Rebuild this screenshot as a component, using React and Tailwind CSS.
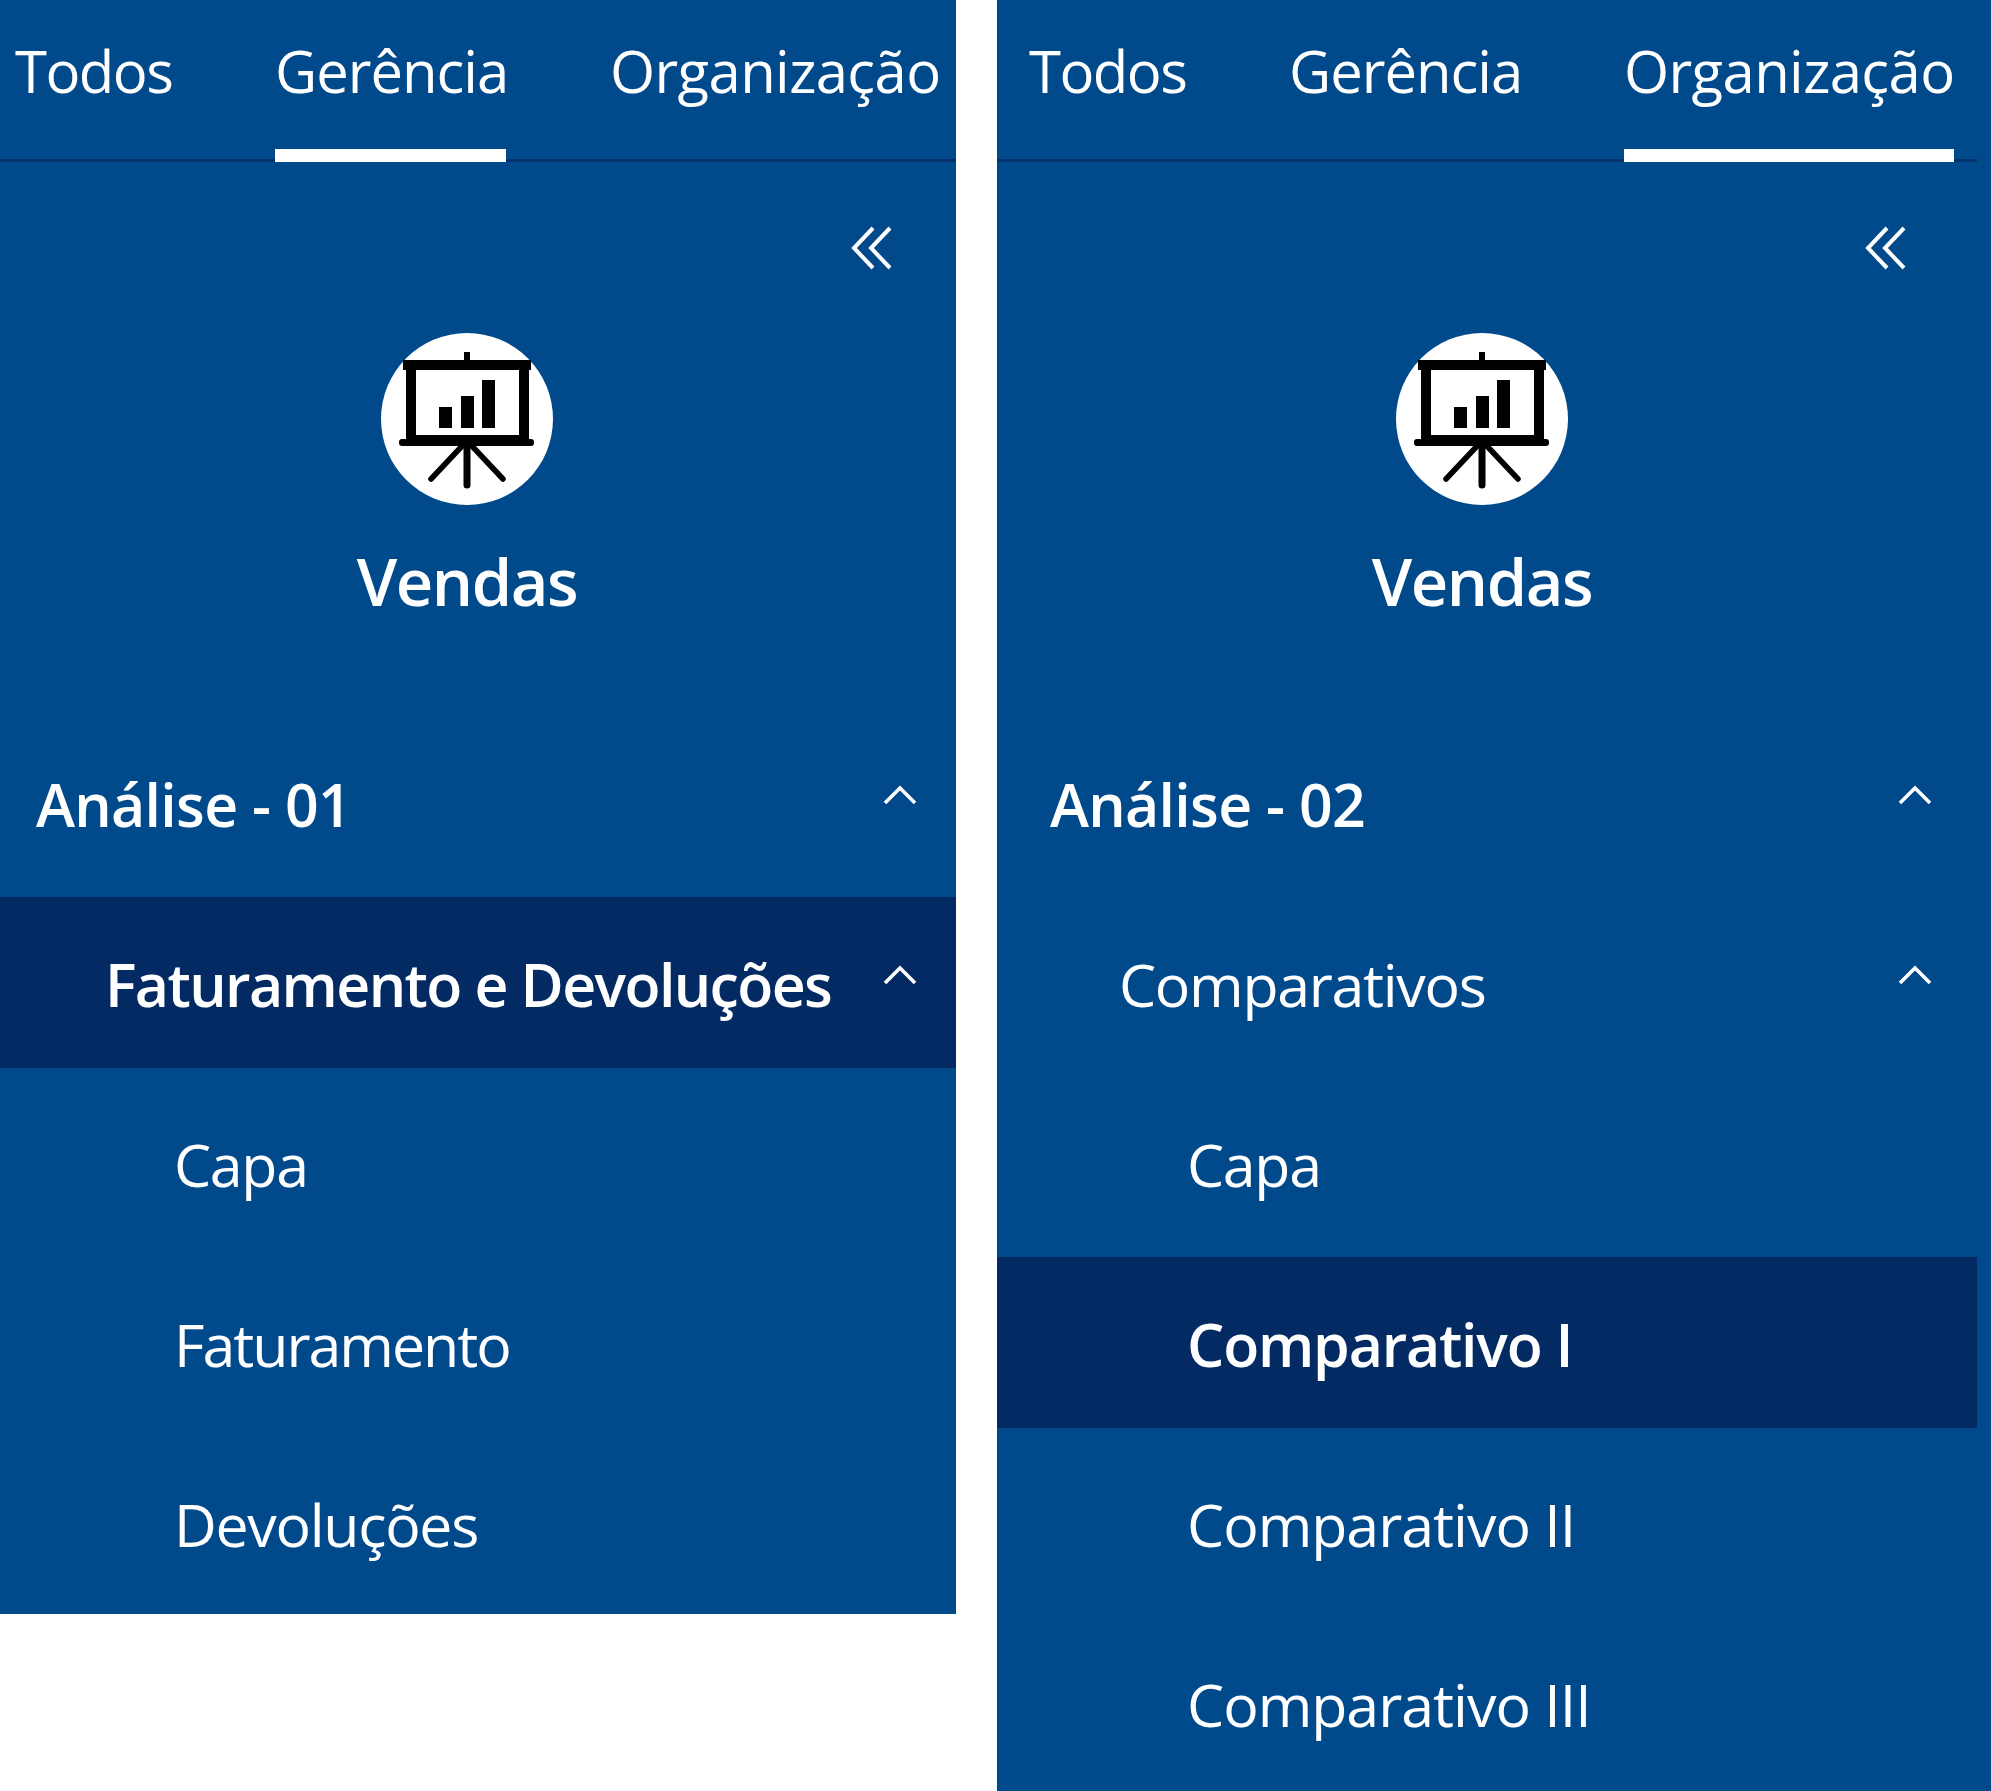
import React from 'react';

const font = { fontFamily: '"Open Sans", "Noto Sans", sans-serif' };

function ChevronUp({ className }) {
    return (
        <svg viewBox="0 0 34 20" className={className} fill="none" stroke="white" strokeWidth="3.6">
            <path d="M2 18 L17 3 L32 18" />
        </svg>
    );
}

function DoubleChevron() {
    return (
        <svg viewBox="0 0 42 44" className="w-[42px] h-[44px]" fill="none" stroke="white" strokeWidth="4">
            <path d="M22 2 L3 22 L22 42" />
            <path d="M39 2 L20 22 L39 42" />
        </svg>
    );
}

function BoardIcon() {
    return (
        <div className="w-[172px] h-[172px] rounded-full bg-white">
            <svg viewBox="0 0 172 172" className="w-full h-full" fill="black">
                <rect x="83" y="19" width="6" height="10" />
                <rect x="22" y="27" width="128" height="10" />
                <rect x="25" y="30" width="10" height="80" />
                <rect x="138" y="30" width="10" height="80" />
                <rect x="25" y="102" width="123" height="8" />
                <rect x="18" y="106" width="135" height="7" rx="3" />
                <rect x="58" y="74" width="13" height="21" />
                <rect x="80" y="63" width="13" height="32" />
                <rect x="101" y="47" width="13" height="48" />
                <path d="M86 110 V152" stroke="black" strokeWidth="7" strokeLinecap="round" fill="none" />
                <path d="M82 112 L50 146 M90 112 L122 146" stroke="black" strokeWidth="5.5" strokeLinecap="round" fill="none" />
            </svg>
        </div>
    );
}

const tabs = [
    { label: 'Todos', width: 'w-[156px]', tracking: 'tracking-[-1.5px]' },
    { label: 'Gerência', width: 'w-[231px]', tracking: 'tracking-[-1px]' },
    { label: 'Organização', width: 'w-[330px]', tracking: 'tracking-[-0.6px]' },
];

function Tabs({ active, padClass }) {
    return (
        <div className={`flex gap-[104px] h-[162px] border-b-3 border-[#04316a] ${padClass}`}>
            {tabs.map((tab) => (
                <div
                    key={tab.label}
                    className={`${tab.width} ${tab.tracking} h-[162px] pt-[35px] text-[58px] leading-[72px] text-white whitespace-nowrap ${active === tab.label ? 'border-b-[13px] border-white' : ''}`}
                >
                    {tab.label}
                </div>
            ))}
        </div>
    );
}

function Row({ label, bold, active, chevron, padClass, chevronClass, tracking = 'tracking-[-1.3px]' }) {
    return (
        <div className={`h-[171px] mb-[9px] flex items-center justify-between text-[59px] text-white ${padClass} ${chevronClass} ${tracking} ${bold ? 'font-semibold' : ''} ${active ? 'bg-[#032a62]' : ''}`}>
            <span className="whitespace-nowrap pt-[3px]">{label}</span>
            {chevron && <ChevronUp className="w-[34px] h-[20px] mb-[16px]" />}
        </div>
    );
}

function Panel({ panelClass, tab, tabPad, heroPad, collapsePad, analise, rows, lv0, lv1, lv2, chevronClass }) {
    const padFor = { 0: lv0, 1: lv1, 2: lv2 };
    return (
        <div className={`bg-[#004a8c] overflow-hidden ${panelClass}`} style={font}>
            <Tabs active={tab} padClass={tabPad} />
            <div className={`flex justify-end pt-[64px] ${collapsePad}`}>
                <DoubleChevron />
            </div>
            <div className={`flex flex-col items-center pt-[63px] ${heroPad}`}>
                <BoardIcon />
                <div className="mt-[36px] text-[65px] leading-[80px] tracking-[-1.4px] font-semibold text-white">Vendas</div>
            </div>
            <div className="pt-[96px]">
                <Row label={analise} bold chevron padClass={lv0} chevronClass={chevronClass} tracking="tracking-[-0.7px]" />
                {rows.map((r) => (
                    <Row key={r.label} label={r.label} bold={r.active} active={r.active} chevron={r.chevron} padClass={padFor[r.level]} chevronClass={chevronClass} tracking={r.tracking} />
                ))}
            </div>
        </div>
    );
}

export default function App() {
    return (
        <div className="flex items-start gap-[41px] bg-white w-[1991px] h-[1791px]">
            <Panel
                panelClass="w-[956px] h-[1614px] shrink-0"
                tab="Gerência"
                tabPad="pl-[15px]"
                heroPad="pr-[22px]"
                collapsePad="pr-[63px]"
                analise="Análise - 01"
                lv0="pl-[36px]"
                lv1="pl-[105px]"
                lv2="pl-[174px]"
                chevronClass="pr-[39px]"
                rows={[
                    { label: 'Faturamento e Devoluções', level: 1, active: true, chevron: true, tracking: 'tracking-[-1.6px]' },
                    { label: 'Capa', level: 2 },
                    { label: 'Faturamento', level: 2, tracking: 'tracking-[-2px]' },
                    { label: 'Devoluções', level: 2 },
                ]}
            />
            <div className="flex-1 h-[1791px] bg-[#004a8c]">
                <Panel
                    panelClass="w-[980px] h-[1791px]"
                    tab="Organização"
                    tabPad="pl-[32px]"
                    heroPad="pr-[10px]"
                    collapsePad="pr-[70px]"
                    analise="Análise - 02"
                    lv0="pl-[53px]"
                    lv1="pl-[122px]"
                    lv2="pl-[190px]"
                    chevronClass="pr-[45px]"
                    rows={[
                        { label: 'Comparativos', level: 1, chevron: true },
                        { label: 'Capa', level: 2 },
                        { label: 'Comparativo I', level: 2, active: true, tracking: 'tracking-[-1.2px]' },
                        { label: 'Comparativo II', level: 2, tracking: 'tracking-[-1px]' },
                        { label: 'Comparativo III', level: 2, tracking: 'tracking-[-1px]' },
                    ]}
                />
            </div>
        </div>
    );
}
